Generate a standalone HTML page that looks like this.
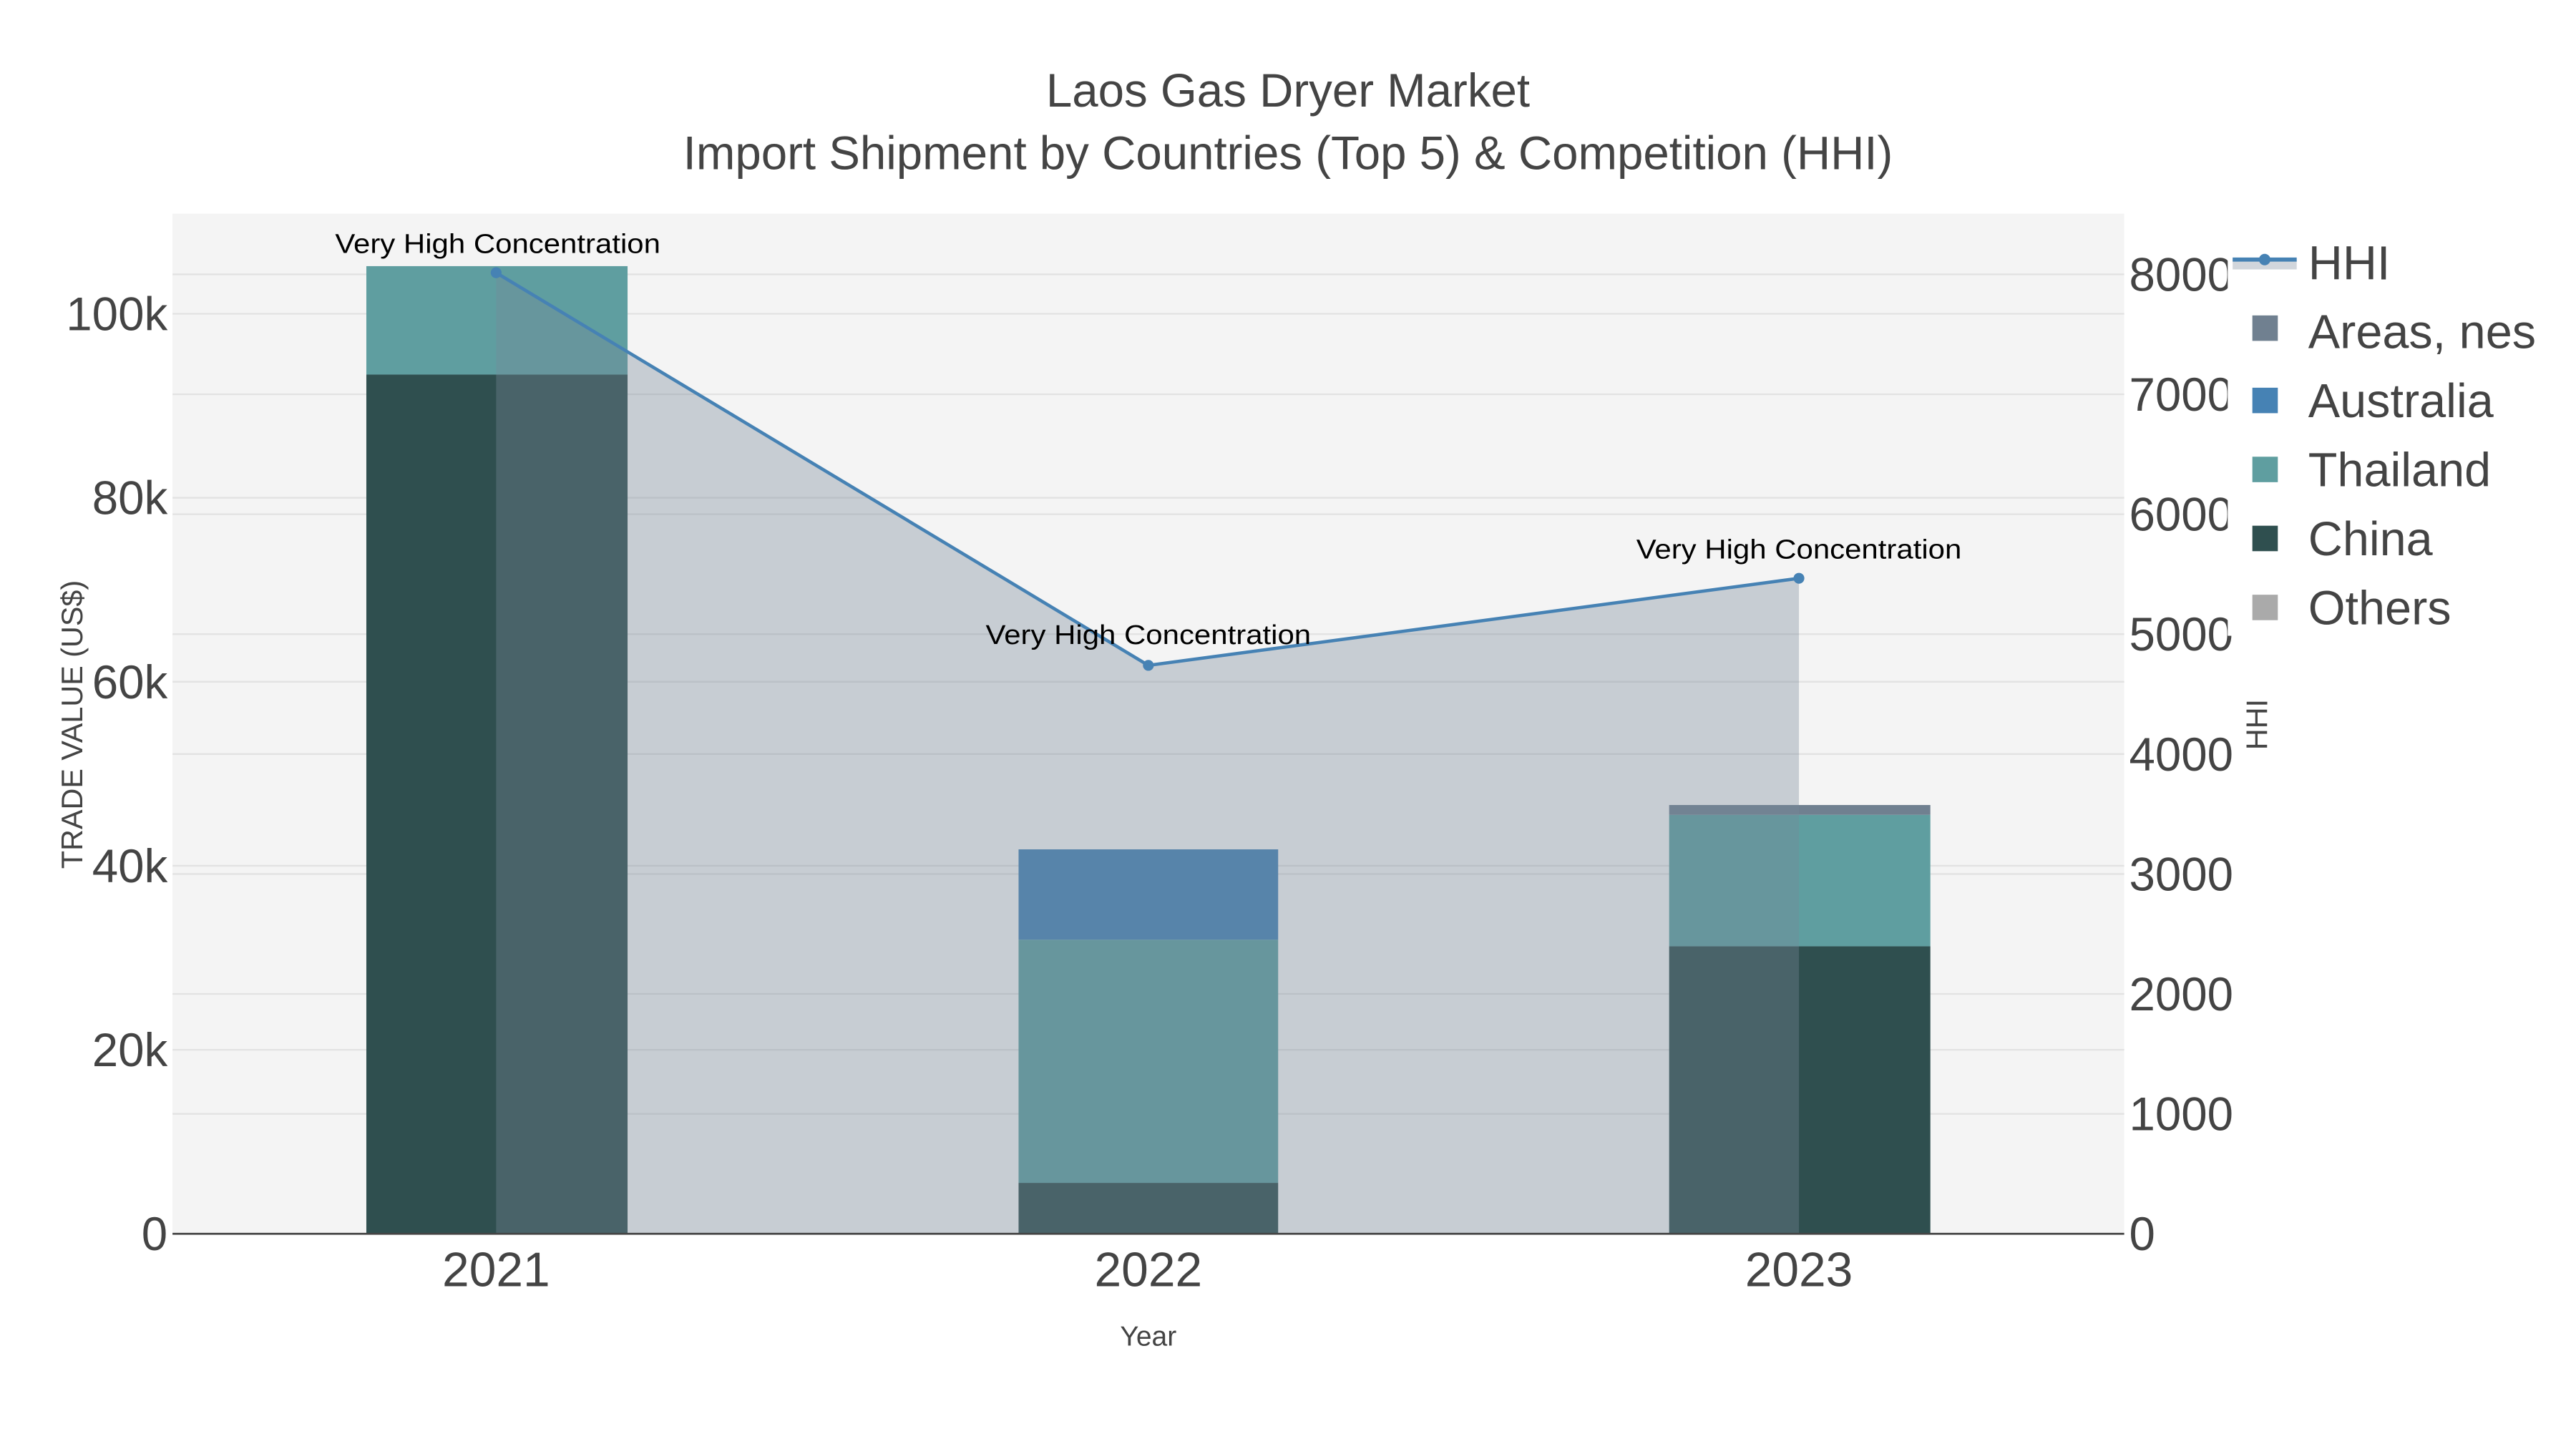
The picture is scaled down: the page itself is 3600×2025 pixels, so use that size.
<!DOCTYPE html>
<html><head><meta charset="utf-8"><style>html,body{margin:0;padding:0;background:#fff}svg{display:block}</style></head>
<body>
<svg width="3600" height="2025" viewBox="0 0 1568 882" preserveAspectRatio="none" xmlns="http://www.w3.org/2000/svg" font-family="Liberation Sans, Arial, sans-serif">
<rect x="0" y="0" width="1568" height="882" fill="#fff"/>
<rect x="105" y="130" width="1188" height="621" fill="#f4f4f4"/>
<g stroke="#e2e2e2" stroke-width="1">
<line x1="105" x2="1293" y1="639" y2="639"/><line x1="105" x2="1293" y1="527" y2="527"/>
<line x1="105" x2="1293" y1="415" y2="415"/><line x1="105" x2="1293" y1="303" y2="303"/>
<line x1="105" x2="1293" y1="191" y2="191"/>
<line x1="105" x2="1293" y1="678" y2="678"/><line x1="105" x2="1293" y1="605" y2="605"/>
<line x1="105" x2="1293" y1="532" y2="532"/><line x1="105" x2="1293" y1="459" y2="459"/>
<line x1="105" x2="1293" y1="386" y2="386"/><line x1="105" x2="1293" y1="313" y2="313"/>
<line x1="105" x2="1293" y1="240" y2="240"/><line x1="105" x2="1293" y1="167" y2="167"/>
</g>
<rect x="223" y="228" width="159" height="523" fill="#2f4f4f"/>
<rect x="223" y="162" width="159" height="66" fill="#5f9ea0"/>
<rect x="620" y="720" width="158" height="31" fill="#2f4f4f"/>
<rect x="620" y="572" width="158" height="148" fill="#5f9ea0"/>
<rect x="620" y="517" width="158" height="55" fill="#4682b4"/>
<rect x="1016" y="576" width="159" height="175" fill="#2f4f4f"/>
<rect x="1016" y="496" width="159" height="80" fill="#5f9ea0"/>
<rect x="1016" y="490" width="159" height="6" fill="#708090"/>
<polygon points="302,166 699,405 1095,352 1095,751 302,751" fill="rgba(119,136,153,0.36)"/>
<line x1="105" x2="1293" y1="751" y2="751" stroke="#444" stroke-width="1.2"/>
<polyline points="302,166 699,405 1095,352" fill="none" stroke="#4682b4" stroke-width="2"/>
<circle cx="302" cy="166" r="3.3" fill="#4682b4"/><circle cx="699" cy="405" r="3.3" fill="#4682b4"/><circle cx="1095" cy="352" r="3.3" fill="#4682b4"/>
<g font-size="16.5" fill="#000" text-anchor="middle">
<text x="303" y="154" textLength="198" lengthAdjust="spacingAndGlyphs">Very High Concentration</text>
<text x="699" y="392" textLength="198" lengthAdjust="spacingAndGlyphs">Very High Concentration</text>
<text x="1095" y="340" textLength="198" lengthAdjust="spacingAndGlyphs">Very High Concentration</text>
</g>
<g fill="#444" text-anchor="middle" font-size="28.5">
<text x="784" y="65">Laos Gas Dryer Market</text>
<text x="784" y="103">Import Shipment by Countries (Top 5) &amp; Competition (HHI)</text>
</g>
<g fill="#444" font-size="28.5" text-anchor="end">
<text x="102" y="761">0</text><text x="102" y="649">20k</text><text x="102" y="537">40k</text>
<text x="102" y="425">60k</text><text x="102" y="313">80k</text><text x="102" y="201">100k</text>
</g>
<g fill="#444" font-size="28.5">
<text x="1296" y="761">0</text><text x="1296" y="688">1000</text><text x="1296" y="615">2000</text>
<text x="1296" y="542">3000</text><text x="1296" y="469">4000</text><text x="1296" y="396">5000</text>
<text x="1296" y="323">6000</text><text x="1296" y="250">7000</text><text x="1296" y="177">8000</text>
</g>
<g fill="#444" font-size="29.5" text-anchor="middle">
<text x="302" y="783">2021</text><text x="699" y="783">2022</text><text x="1095" y="783">2023</text>
</g>
<text x="699" y="819" font-size="17" fill="#444" text-anchor="middle">Year</text>
<text transform="translate(50,441) rotate(-90)" font-size="18" fill="#444" text-anchor="middle">TRADE VALUE (US$)</text>
<text transform="translate(1380,441) rotate(-90)" font-size="18" fill="#444" text-anchor="middle">HHI</text>
<rect x="1356" y="142" width="212" height="245" fill="#fff"/>
<rect x="1359" y="158" width="39" height="6" fill="#d1d6dc"/>
<line x1="1359" x2="1398" y1="158" y2="158" stroke="#4682b4" stroke-width="2.5"/>
<circle cx="1378.5" cy="158" r="3.5" fill="#4682b4"/>
<rect x="1371" y="192" width="15.5" height="15.5" fill="#708090"/>
<rect x="1371" y="236" width="15.5" height="15.5" fill="#4682b4"/>
<rect x="1371" y="278" width="15.5" height="15.5" fill="#5f9ea0"/>
<rect x="1371" y="320" width="15.5" height="15.5" fill="#2f4f4f"/>
<rect x="1371" y="362" width="15.5" height="15.5" fill="#aaaaaa"/>
<g fill="#444" font-size="29">
<text x="1405" y="170">HHI</text><text x="1405" y="212">Areas, nes</text><text x="1405" y="254">Australia</text>
<text x="1405" y="296">Thailand</text><text x="1405" y="338">China</text><text x="1405" y="380">Others</text>
</g>
</svg>
</body></html>
